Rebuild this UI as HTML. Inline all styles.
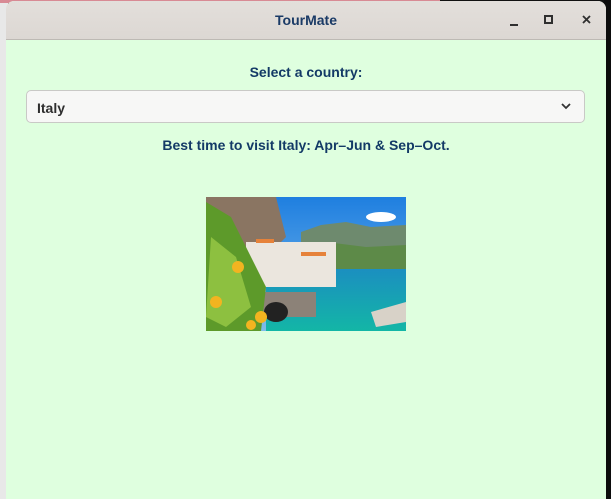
<!DOCTYPE html>
<html><head><style>
html,body{margin:0;padding:0;width:611px;height:499px;overflow:hidden;background:#111;font-family:"Liberation Sans",sans-serif;}
.leftbg{position:absolute;left:0;top:0;width:8px;height:499px;background:#e8e8e8;}
.rightbg{position:absolute;left:604px;top:0;width:7px;height:499px;background:#0c0c0c;}
.pink{position:absolute;left:0;top:0;width:440px;height:3px;background:#d88a94;}
.win{position:absolute;left:6px;top:1px;width:600px;height:498px;background:#dfffdf;border-radius:8px 8px 0 0;overflow:hidden;}
.title{height:38px;background:linear-gradient(#e3dfdb,#dcd7d3);border-bottom:1px solid #bdb9b4;position:relative;}
.title span{position:absolute;left:0;right:0;top:11px;text-align:center;font-weight:bold;font-size:14px;color:#1a3a66;}
.lbl{position:absolute;left:0;right:0;text-align:center;font-weight:bold;font-size:14px;color:#133a66;}
.combo{position:absolute;left:20px;top:89px;width:559px;height:33px;background:#f7f7f6;border:1px solid #c9c9c6;border-radius:5px;box-sizing:border-box;}
.combo span{position:absolute;left:10px;top:9px;font-size:14px;font-weight:bold;color:#2e2e2e;}
</style></head><body>
<div class="leftbg"></div><div class="rightbg"></div><div class="pink"></div>
<div class="win">
 <div class="title"><span>TourMate</span>
  <div style="position:absolute;left:504px;top:23px;width:8px;height:2px;background:#2f2f2f"></div>
  <div style="position:absolute;left:538px;top:14px;width:5px;height:5px;border:2px solid #2f2f2f"></div>
  <svg style="position:absolute;left:576px;top:14px" width="9" height="9"><path d="M1 1L8 8M8 1L1 8" stroke="#2f2f2f" stroke-width="1.8"/></svg>
 </div>
 <div class="lbl" style="top:63px">Select a country:</div>
 <div class="combo"><span>Italy</span>
  <svg style="position:absolute;left:534px;top:12px" width="10" height="7"><path d="M1 1L5 5L9 1" stroke="#333" stroke-width="1.8" fill="none"/></svg>
 </div>
 <div class="lbl" style="top:136px">Best time to visit Italy: Apr–Jun &amp; Sep–Oct.</div>
 <svg style="position:absolute;left:200px;top:196px" width="200" height="134" viewBox="0 0 200 134">
  <defs><linearGradient id="sky" x1="0" y1="0" x2="0" y2="1"><stop offset="0" stop-color="#1f7fe0"/><stop offset="1" stop-color="#7fbcea"/></linearGradient>
  <linearGradient id="sea" x1="0" y1="0" x2="0" y2="1"><stop offset="0" stop-color="#1b8fc0"/><stop offset="1" stop-color="#13b6a6"/></linearGradient></defs>
  <rect width="200" height="134" fill="url(#sky)"/>
  <ellipse cx="175" cy="20" rx="15" ry="5" fill="#fff"/>
  <path d="M95 35L115 28L140 25L165 30L200 28V75H95Z" fill="#6e8a6e"/>
  <path d="M120 45L160 50L200 48V75H120Z" fill="#5d8a48"/>
  <rect x="60" y="72" width="140" height="62" fill="url(#sea)"/>
  <path d="M0 0H70L80 40L60 60H0Z" fill="#8a7562"/>
  <rect x="40" y="45" width="90" height="45" fill="#ebe6de"/>
  <rect x="50" y="42" width="18" height="4" fill="#e6823a"/><rect x="95" y="55" width="25" height="4" fill="#e6823a"/>
  <rect x="55" y="95" width="55" height="25" fill="#8c8278"/>
  <ellipse cx="70" cy="115" rx="12" ry="10" fill="#222"/>
  <path d="M165 115L200 105V125L170 130Z" fill="#d8d2c8"/>
  <path d="M0 5L25 20L45 60L60 90L55 134H0Z" fill="#5d9a2a"/>
  <path d="M5 40L30 60L45 110L20 130L0 120Z" fill="#8dc040"/>
  <circle cx="32" cy="70" r="6" fill="#f2b420"/><circle cx="10" cy="105" r="6" fill="#f2b420"/>
  <circle cx="55" cy="120" r="6" fill="#f2b420"/><circle cx="45" cy="128" r="5" fill="#f2b420"/>
 </svg>
</div>
</body></html>
